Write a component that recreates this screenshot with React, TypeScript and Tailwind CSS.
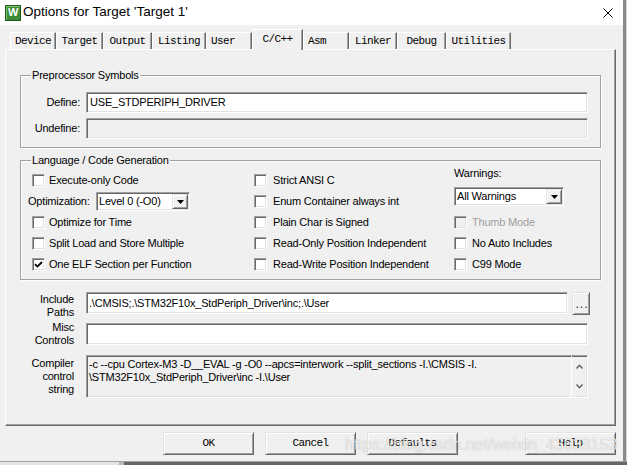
import React from "react";

const SANS = "font-['Liberation_Sans',Arial,sans-serif]";
const MONO = "font-['Liberation_Mono','Courier_New',monospace]";

// classic win32 3D edges
const SUNKEN =
  "border border-t-[#a0a0a0] border-l-[#a0a0a0] border-r-white border-b-white shadow-[inset_1px_1px_0_#696969,inset_-1px_-1px_0_#e3e3e3]";
const RAISED =
  "border border-t-[#e3e3e3] border-l-[#e3e3e3] border-r-[#696969] border-b-[#696969] shadow-[inset_1px_1px_0_#fff,inset_-1px_-1px_0_#a0a0a0]";
const ETCHED = "border border-[#a0a0a0] shadow-[inset_1px_1px_0_#fff,1px_1px_0_#fff]";

const TABS = [
  { label: "Device", w: "w-[46px]" },
  { label: "Target", w: "w-[47px]" },
  { label: "Output", w: "w-[49px]" },
  { label: "Listing", w: "w-[54px]" },
  { label: "User", w: "w-[46px] justify-start pl-[4px]" },
  { label: "C/C++", w: "w-[51px]", active: true },
  { label: "Asm", w: "w-[46px] justify-start pl-[4px]" },
  { label: "Linker", w: "w-[48px]" },
  { label: "Debug", w: "w-[49px]" },
  { label: "Utilities", w: "w-[65px]" },
];

function KeilIcon() {
  return (
    <div className="w-[16px] h-[16px] bg-[#3d8c35] border border-[#1e5a1a] flex items-center justify-center shadow-[inset_1px_1px_0_#7cc46f]">
      <span className="text-white font-bold text-[11px] leading-none">W</span>
    </div>
  );
}

function Check({ label, checked, disabled, gap }: { label: string; checked?: boolean; disabled?: boolean; gap: string }) {
  return (
    <div className="h-[21px] flex items-center">
      <span
        className={`w-[13px] h-[13px] shrink-0 flex items-center justify-center ${SUNKEN} ${
          disabled ? "bg-[#f0f0f0]" : "bg-white"
        }`}
      >
        {checked && (
          <svg width="9" height="9" viewBox="0 0 9 9">
            <path d="M1 4.2 L3.4 6.6 L8 2" stroke="#000" strokeWidth="1.8" fill="none" />
          </svg>
        )}
      </span>
      <span className={`${gap} whitespace-nowrap ${disabled ? "text-[#a0a0a0]" : ""}`}>{label}</span>
    </div>
  );
}

function Combo({ value, w }: { value: string; w: string }) {
  return (
    <div className={`${w} h-[19px] bg-white ${SUNKEN} flex items-center`}>
      <span className="flex-1 pl-[2px] whitespace-nowrap">{value}</span>
      <span className={`w-[16px] h-[15px] mr-[1px] bg-[#f0f0f0] ${RAISED} flex items-center justify-center`}>
        <svg width="7" height="4" viewBox="0 0 7 4">
          <polygon points="0,0 7,0 3.5,4" fill="#000" />
        </svg>
      </span>
    </div>
  );
}

function Btn({ label, className = "" }: { label: string; className?: string }) {
  return (
    <div
      className={`w-[91px] h-[23px] bg-[#f0f0f0] ${RAISED} ${MONO} text-[11px] tracking-[-0.6px] flex items-center justify-center ${className}`}
    >
      {label}
    </div>
  );
}

export default function App() {
  return (
    <div className={`w-[627px] h-[465px] bg-[#f0f0f0] flex flex-col overflow-hidden relative ${SANS} text-black text-[11px] tracking-[-0.2px]`}>
      <div className="flex flex-1 min-h-0">
        <div className="w-[623px] flex flex-col">
          {/* title bar */}
          <div className="h-[25px] shrink-0 bg-white flex items-center pl-[5px]">
            <KeilIcon />
            <span className="ml-[2px] text-[13.5px] tracking-normal">Options for Target 'Target 1'</span>
            <svg className="ml-auto mr-[10px]" width="10" height="10" viewBox="0 0 10 10">
              <path d="M0.5 0.5 L9.5 9.5 M9.5 0.5 L0.5 9.5" stroke="#000" strokeWidth="1" />
            </svg>
          </div>

          {/* tabs */}
          <div className={`h-[24px] shrink-0 flex items-start pl-[10px] pt-[4px] ${MONO} text-[11px] tracking-[-0.6px]`}>
            {TABS.map((t) =>
              t.active ? (
                <div
                  key={t.label}
                  className={`${t.w} h-[21px] relative z-10 bg-[#f0f0f0] border-t border-l border-r border-t-white border-l-white border-r-[#696969] shadow-[inset_-1px_0_0_#a0a0a0] flex justify-center pt-[1px] leading-[17px]`}
                >
                  {t.label}
                </div>
              ) : (
                <div
                  key={t.label}
                  className={`${t.w} h-[17px] mt-[3px] bg-[#f0f0f0] border-t border-l border-r border-t-white border-l-white border-r-[#696969] shadow-[inset_-1px_0_0_#a0a0a0] flex items-center justify-center leading-[16px]`}
                >
                  {t.label}
                </div>
              )
            )}
          </div>

          {/* tab panel */}
          <div className="ml-[5px] w-[611px] h-[377px] shrink-0 border-t border-l border-r border-b border-t-white border-l-white border-r-[#696969] border-b-[#696969] shadow-[inset_-1px_-1px_0_#a0a0a0] pt-[25px] flex flex-col">
            {/* Preprocessor Symbols */}
            <div className={`ml-[14px] w-[581px] relative ${ETCHED} pt-[16px] pb-[8px] flex flex-col gap-[5px]`}>
              <span className="absolute left-[10px] -top-[8px] px-[1px] bg-[#f0f0f0] leading-[14px]">Preprocessor Symbols</span>
              <div className="flex items-center">
                <span className="w-[59px] text-right">Define:</span>
                <div className={`ml-[6px] w-[502px] h-[21px] bg-white ${SUNKEN} pl-[3px] leading-[19px] whitespace-nowrap`}>
                  USE_STDPERIPH_DRIVER
                </div>
              </div>
              <div className="flex items-center">
                <span className="w-[59px] text-right">Undefine:</span>
                <div className={`ml-[6px] w-[502px] h-[21px] bg-[#f0f0f0] ${SUNKEN}`} />
              </div>
            </div>

            {/* Language / Code Generation */}
            <div className={`mt-[12px] ml-[14px] w-[581px] h-[120px] relative ${ETCHED} flex`}>
              <span className="absolute left-[10px] -top-[8px] px-[1px] bg-[#f0f0f0] leading-[14px]">Language / Code Generation</span>
              <div className="ml-[7px] w-[226px] pt-[9px] flex flex-col">
                <div className="pl-[4px]">
                  <Check label="Execute-only Code" gap="ml-[4px]" />
                </div>
                <div className="h-[21px] flex items-center">
                  <span className="w-[68px] whitespace-nowrap">Optimization:</span>
                  <Combo value="Level 0 (-O0)" w="w-[94px]" />
                </div>
                <div className="pl-[4px]">
                  <Check label="Optimize for Time" gap="ml-[4px]" />
                  <Check label="Split Load and Store Multiple" gap="ml-[4px]" />
                  <Check label="One ELF Section per Function" gap="ml-[4px]" checked />
                </div>
              </div>
              <div className="w-[200px] pt-[9px] flex flex-col">
                <Check label="Strict ANSI C" gap="ml-[6px]" />
                <Check label="Enum Container always int" gap="ml-[6px]" />
                <Check label="Plain Char is Signed" gap="ml-[6px]" />
                <Check label="Read-Only Position Independent" gap="ml-[6px]" />
                <Check label="Read-Write Position Independent" gap="ml-[6px]" />
              </div>
              <div className="flex-1 pt-[5px] flex flex-col">
                <span className="h-[14px] leading-[14px]">Warnings:</span>
                <div className="mt-[7px]">
                  <Combo value="All Warnings" w="w-[110px]" />
                </div>
                <div className="mt-[6px]">
                  <Check label="Thumb Mode" gap="ml-[5px]" disabled />
                  <Check label="No Auto Includes" gap="ml-[5px]" />
                  <Check label="C99 Mode" gap="ml-[5px]" />
                </div>
              </div>
            </div>

            {/* Include Paths */}
            <div className="mt-[12px] ml-[8px] flex items-start h-[23px]">
              <div className="w-[60px] text-right leading-[13px] pt-[1px] shrink-0">
                Include
                <br />
                Paths
              </div>
              <div className={`ml-[12px] w-[482px] h-[22px] bg-white ${SUNKEN} pl-[2px] leading-[20px] whitespace-nowrap`}>
                .\CMSIS;.\STM32F10x_StdPeriph_Driver\inc;.\User
              </div>
              <div className={`ml-[4px] w-[18px] h-[23px] bg-[#f0f0f0] ${RAISED} ${MONO} text-[9px] tracking-[-1px] flex items-end justify-center pb-[3px] leading-none`}>
                ...
              </div>
            </div>

            {/* Misc Controls */}
            <div className="mt-[6px] ml-[8px] flex items-center">
              <div className="w-[60px] text-right leading-[13px] shrink-0">
                Misc
                <br />
                Controls
              </div>
              <div className={`ml-[12px] w-[502px] h-[22px] bg-white ${SUNKEN}`} />
            </div>

            {/* Compiler control string */}
            <div className="mt-[8px] ml-[8px] flex items-center">
              <div className="w-[60px] text-right leading-[13px] shrink-0">
                Compiler
                <br />
                control
                <br />
                string
              </div>
              <div className={`ml-[12px] w-[502px] h-[43px] bg-[#f0f0f0] ${SUNKEN} flex`}>
                <div className="flex-1 pl-[2px] pt-[2px] leading-[13px] whitespace-nowrap overflow-hidden">
                  -c --cpu Cortex-M3 -D__EVAL -g -O0 --apcs=interwork --split_sections -I.\CMSIS -I.
                  <br />
                  \STM32F10x_StdPeriph_Driver\inc -I.\User
                </div>
                <div className="w-[16px] border-l border-l-white flex flex-col items-center justify-between py-[8px]">
                  <svg width="7" height="5" viewBox="0 0 7 5">
                    <path d="M0.5 4.5 L3.5 1.2 L6.5 4.5" stroke="#606060" strokeWidth="1.4" fill="none" />
                  </svg>
                  <svg width="7" height="5" viewBox="0 0 7 5">
                    <path d="M0.5 0.5 L3.5 3.8 L6.5 0.5" stroke="#606060" strokeWidth="1.4" fill="none" />
                  </svg>
                </div>
              </div>
            </div>
          </div>

          {/* dialog buttons */}
          <div className="mt-[6px] pl-[163px] flex gap-[11px]">
            <Btn label="OK" />
            <Btn label="Cancel" />
            <Btn label="Defaults" />
            <Btn label="Help" className="ml-[56px]" />
          </div>
        </div>
        <div className="w-[3px] bg-[#8a8a8a]" />
        <div className="w-[1px] bg-[#d8d8d8]" />
      </div>

      {/* window bottom edge over the window behind */}
      <div className="h-[4px] shrink-0 flex border-t border-t-[#a0a0a0]">
        <div className="w-[119px] bg-[#e4e4e4]" />
        <div className="w-[5px] bg-[#b8b8b8]" />
        <div className="flex-1 bg-[#666666]" />
      </div>

      {/* blog watermark */}
      <span className="absolute left-[345px] top-[433px] text-[16px] tracking-normal text-white/80 [text-shadow:0_0_1px_rgba(0,0,0,0.35)] whitespace-nowrap pointer-events-none">
        https://blog.csdn.net/weixin_43638153
      </span>
    </div>
  );
}
